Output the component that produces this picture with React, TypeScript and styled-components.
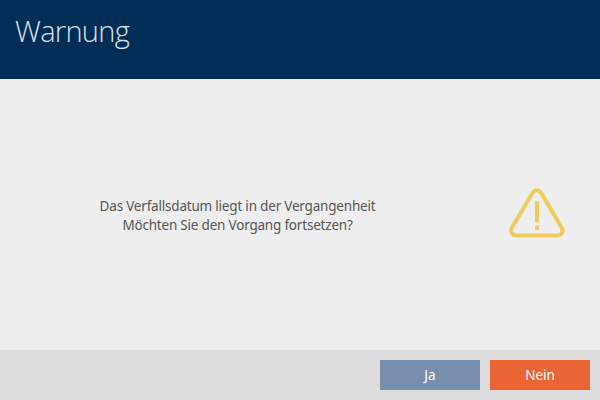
import React from "react";
import styled, { createGlobalStyle } from "styled-components";

const GlobalStyle = createGlobalStyle`
  body { margin: 0; }
`;

const Dialog = styled.div`
  width: 600px;
  height: 400px;
  display: flex;
  flex-direction: column;
  overflow: hidden;
  background: #eeeeee;
  font-family: "Open Sans", "Noto Sans", sans-serif;
`;

const Header = styled.header`
  box-sizing: border-box;
  height: 79px;
  padding: 11px 15px;
  background: #002d56;
`;

const Title = styled.h1`
  margin: 0;
  color: #d9e0e6;
  font-size: 29px;
  font-weight: 300;
  line-height: 40px;
  letter-spacing: -0.7px;
`;

const Body = styled.main`
  flex: 1;
  display: grid;
  grid-template-columns: 475px 124px;
  align-items: center;
  justify-items: center;
`;

const Message = styled.p`
  margin: 3px 0 0;
  color: #555555;
  font-family: "Noto Sans", "Open Sans", sans-serif;
  font-size: 13.5px;
  line-height: 19px;
  letter-spacing: -0.2px;
  text-align: center;
`;

const WarningIcon = styled.svg`
  width: 60px;
  height: 53px;
  fill: none;
  stroke: #efcb5a;
  stroke-width: 4;
`;

const Footer = styled.footer`
  box-sizing: border-box;
  height: 50px;
  padding: 10px;
  display: flex;
  justify-content: flex-end;
  gap: 10px;
  background: #dcdcdc;
`;

const Button = styled.button<{ $color: string }>`
  width: 100px;
  height: 30px;
  padding: 0;
  border: 0;
  background: ${(p) => p.$color};
  color: #fff;
  font: 13.5px "Noto Sans", "Open Sans", sans-serif;
`;

export default function App() {
  return (
    <Dialog>
      <GlobalStyle />
      <Header>
        <Title>Warnung</Title>
      </Header>
      <Body>
        <Message>
          Das Verfallsdatum liegt in der Vergangenheit
          <br />
          Möchten Sie den Vorgang fortsetzen?
        </Message>
        <WarningIcon viewBox="0 0 60 53">
          <path d="M25.600 4.700 5.200 39.200C2.700 43.500 5.200 47.500 10 47.500H49.700C54.500 47.500 57 43.500 54.500 39.200L34.100 4.700C32 1.300 27.700 1.300 25.600 4.700Z" />
          <path d="M30 13.300V34.300M30 37.600V42" />
        </WarningIcon>
      </Body>
      <Footer>
        <Button $color="#788eae">Ja</Button>
        <Button $color="#eb6534">Nein</Button>
      </Footer>
    </Dialog>
  );
}
